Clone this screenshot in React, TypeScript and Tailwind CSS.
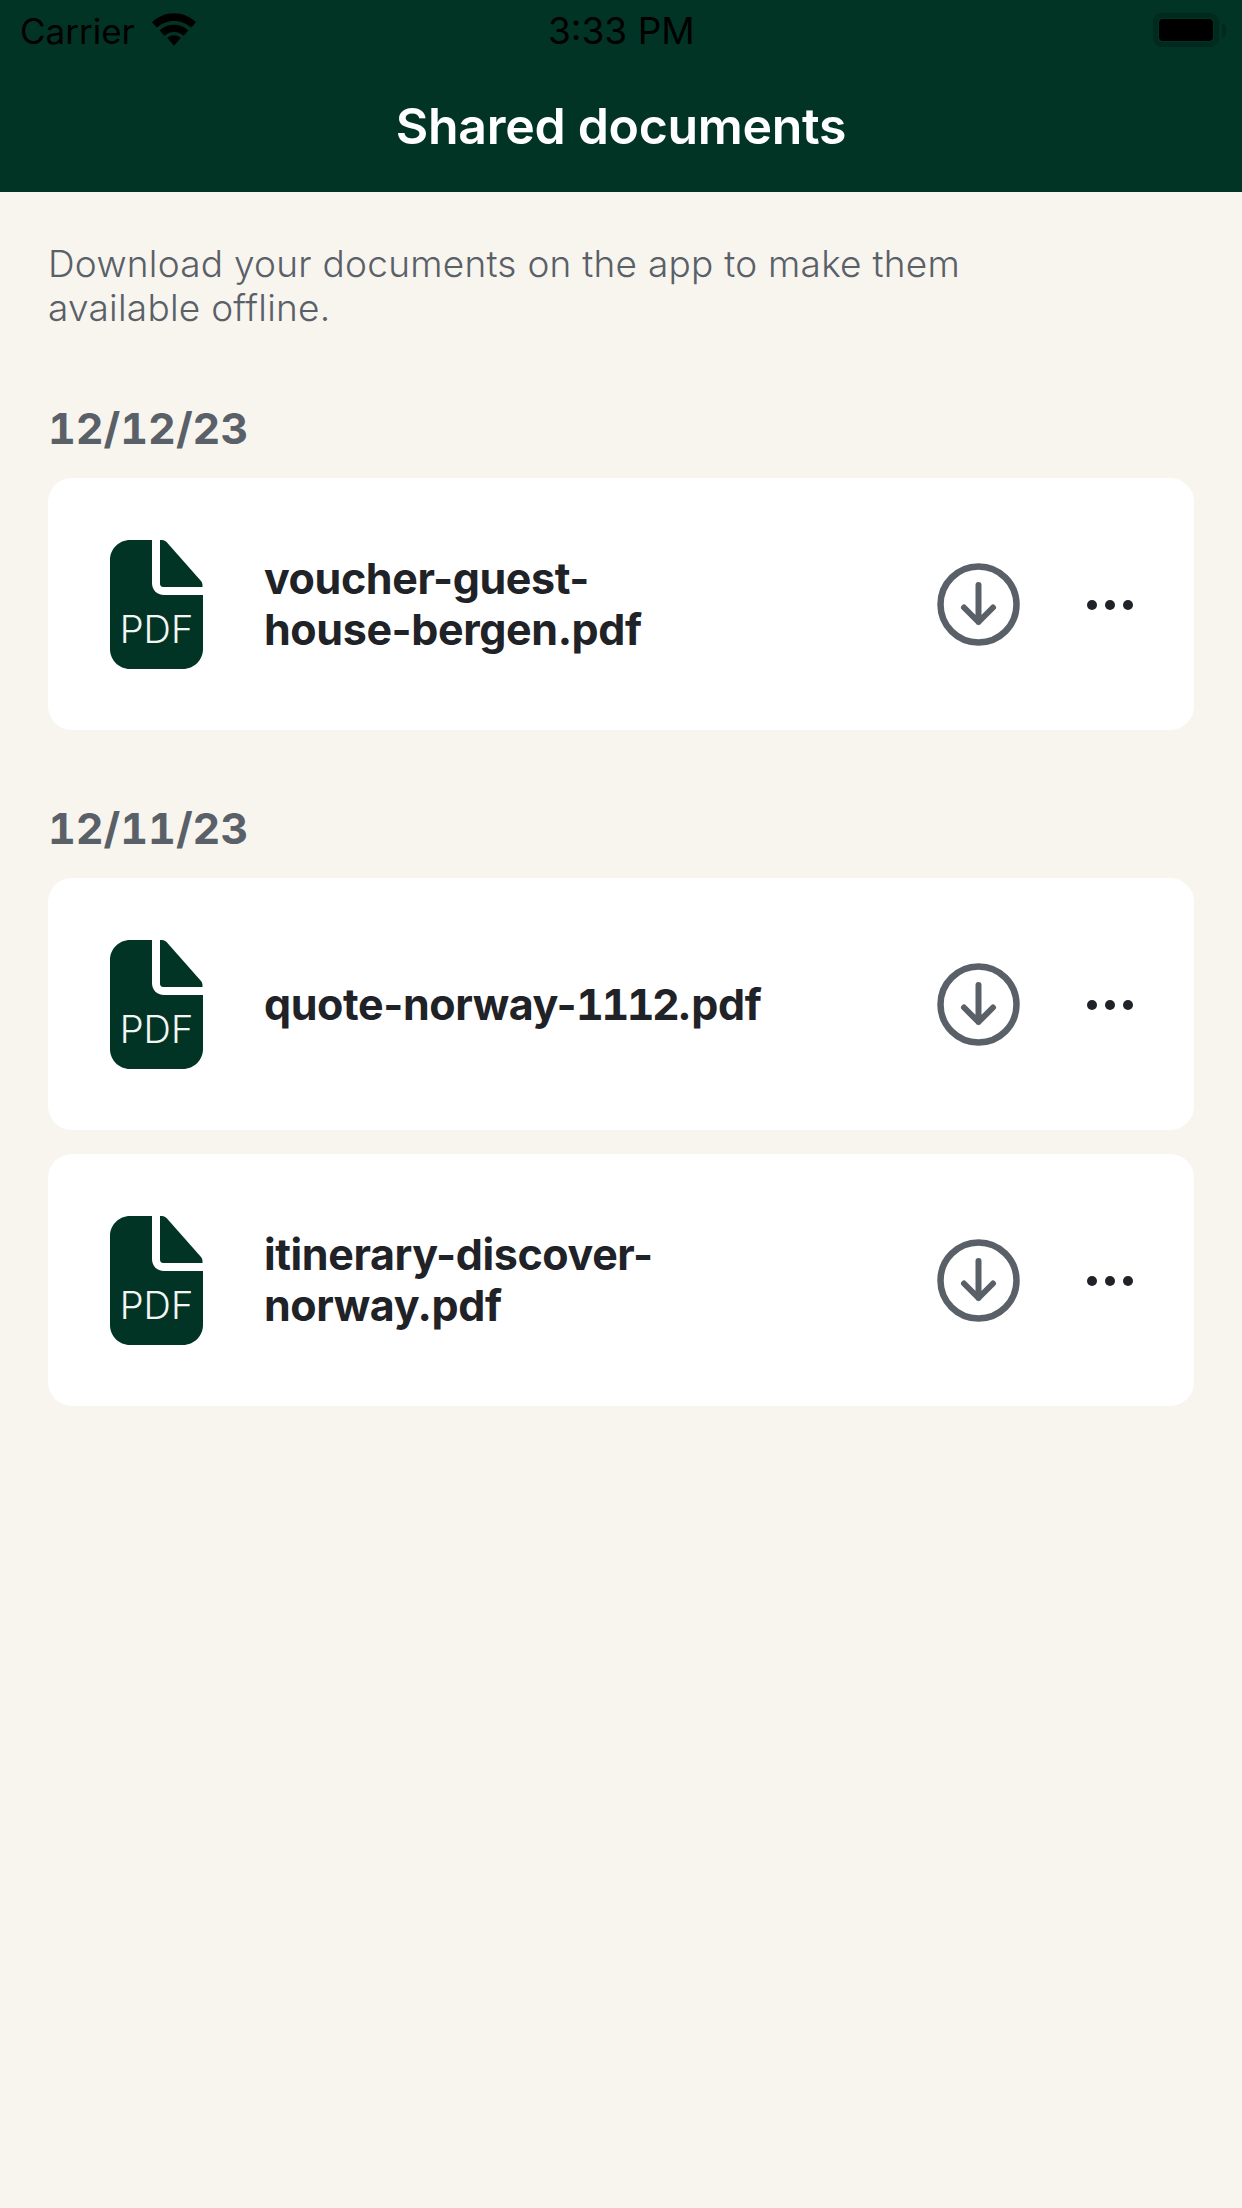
const sections = [
  {
    date: "12/12/23",
    files: [["voucher-guest-", "house-bergen.pdf"]],
  },
  {
    date: "12/11/23",
    files: [["quote-norway-1112.pdf"], ["itinerary-discover-", "norway.pdf"]],
  },
];

function PdfIcon() {
  return (
    <div className="relative w-[93px] h-[129px] shrink-0">
      <svg className="w-full h-full" viewBox="0 0 93 129" fill="none">
        <path
          d="M20 0H42V43C42 50 47 55 54 55H93V109C93 120 84 129 73 129H20C9 129 0 120 0 109V20C0 9 9 0 20 0Z"
          fill="#023425"
        />
        <path d="M50 0H52C54 0 55.5 1 57 2.500L91 41C92.500 43 92.500 44 92.500 47H54C51 47 50 46 50 43V0Z" fill="#023425" />
      </svg>
      <span className="absolute left-0 right-0 top-[67px] text-center text-[38px] leading-[44px] text-[#f3f6f4] font-['Inter',sans-serif] font-light">
        PDF
      </span>
    </div>
  );
}

function DownloadIcon() {
  return (
    <svg className="w-[83px] h-[83px] shrink-0" viewBox="0 0 83 83" fill="none" stroke="#5a6068" strokeLinecap="round" strokeLinejoin="round">
      <circle cx="41.500" cy="41.500" r="38" strokeWidth="6.500" />
      <path d="M41.500 22V59M27 44.500L41.500 59L56 44.500" strokeWidth="6" />
    </svg>
  );
}

function MoreIcon() {
  return (
    <div className="flex items-center gap-[8px] ml-[67px] mr-[61px] mt-[2px]">
      <span className="w-[10px] h-[10px] rounded-full bg-[#1f2227]" />
      <span className="w-[10px] h-[10px] rounded-full bg-[#1f2227]" />
      <span className="w-[10px] h-[10px] rounded-full bg-[#1f2227]" />
    </div>
  );
}

// digits are wider in the reference, the hyphens are not
function FileLine({ text }: { text: string }) {
  return (
    <div>
      {text.split(/(\d+)/).map((part, i) => (
        <span key={i} className={/\d/.test(part) ? "tabular-nums tracking-[-2.5px]" : ""}>
          {part}
        </span>
      ))}
    </div>
  );
}

function FileCard({ lines }: { lines: string[] }) {
  return (
    <div className="flex items-center h-[252px] bg-white rounded-[24px] pl-[62px]">
      <PdfIcon />
      <div className="flex-1 ml-[61px] text-[43px] leading-[51px] font-bold text-[#1f2227] tracking-[-0.4px]">
        {lines.map((line) => (
          <FileLine key={line} text={line} />
        ))}
      </div>
      <DownloadIcon />
      <MoreIcon />
    </div>
  );
}

export default function App() {
  return (
    <div className="w-[1242px] h-[2208px] bg-[#f8f5ee] font-['Inter',sans-serif] overflow-hidden">
      {/* Header */}
      <header className="h-[192px] bg-[#023425]">
        <div className="relative h-[63px] text-black font-['Inter',sans-serif]">
          <div className="absolute left-[20px] top-[11px] flex items-center gap-[17px] leading-[40px] text-[35px]">
            <span>Carrier</span>
            <svg className="w-[44px] h-[33px] -mt-[3px]" viewBox="0 0 46 34" fill="#000">
              <path d="M23 0C14 0 6 3.500 0 9.500L5 15C10 10.500 16 8 23 8C30 8 36 10.500 41 15L46 9.500C40 3.500 32 0 23 0Z" />
              <path d="M23 12C17 12 12 14 8 18L13 23.500C16 21 19 19.500 23 19.500C27 19.500 30 21 33 23.500L38 18C34 14 29 12 23 12Z" />
              <path d="M23 23C20 23 18 24 16 26L23 34L30 26C28 24 26 23 23 23Z" />
            </svg>
          </div>
          <span className="absolute left-[548px] top-[11px] leading-[40px] text-[37px]">3:33 PM</span>
          <div className="absolute left-[1153px] top-[13px] flex items-center gap-[3px]">
            <div className="w-[66px] h-[34px] rounded-[9px] border-[5px] border-[#012a1e] p-[1px]">
              <div className="w-full h-full rounded-[4px] bg-black" />
            </div>
            <div className="w-[4px] h-[13px] rounded-r-[4px] bg-[#012a1e]" />
          </div>
        </div>
        <h1 className="text-center text-white text-[50px] leading-[60px] font-semibold mt-[33px] tracking-[-0.3px]">
          Shared documents
        </h1>
      </header>

      {/* Content */}
      <main className="px-[48px] pt-[50px]">
        <p className="text-[37px] leading-[44px] font-light text-[#5a6068] tracking-[0.25px]">
          Download your documents on the app to make them
          <br />
          available offline.
        </p>
        {sections.map((section) => (
          <section key={section.date} className="mt-[73px] first:mt-[77px]">
            <h2 className="text-[43px] leading-[50px] font-bold text-[#5a6068] mb-[25px] tabular-nums">{section.date}</h2>
            <div className="flex flex-col gap-[24px]">
              {section.files.map((lines) => (
                <FileCard key={lines[0]} lines={lines} />
              ))}
            </div>
          </section>
        ))}
      </main>
    </div>
  );
}
